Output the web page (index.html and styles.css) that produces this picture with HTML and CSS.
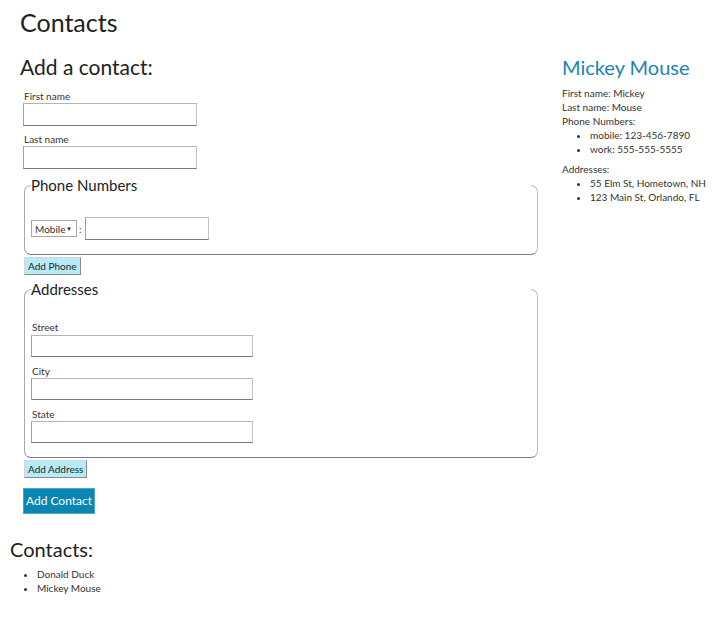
FILE: index.html
```html
<!DOCTYPE html>
<html lang="en">
<head>
<meta charset="utf-8">
<title>Contacts</title>
<link rel="stylesheet" href="styles.css">
</head>
<body>
<div class="page">
  <header class="top">
    <h1 class="title">Contacts</h1>
  </header>
  <main class="layout">
    <section class="editor">
      <h2 class="heading">Add a contact:</h2>
      <form class="form">
        <div class="group">
          <label class="label" for="first">First name</label>
          <input class="field" id="first" type="text">
        </div>
        <div class="group">
          <label class="label" for="last">Last name</label>
          <input class="field" id="last" type="text">
        </div>
        <fieldset class="box phones">
          <legend class="legend">Phone Numbers</legend>
          <div class="phone-row">
            <span class="select-wrap">
              <select class="select">
                <option>Mobile</option>
                <option>Work</option>
              </select>
            </span>
            <span class="colon">:</span>
            <input class="field phone" type="text">
          </div>
        </fieldset>
        <button type="button" class="small-btn">Add Phone</button>
        <fieldset class="box addresses">
          <legend class="legend">Addresses</legend>
          <div class="group">
            <label class="label">Street</label>
            <input class="field wide" type="text">
          </div>
          <div class="group">
            <label class="label">City</label>
            <input class="field wide" type="text">
          </div>
          <div class="group last">
            <label class="label">State</label>
            <input class="field wide" type="text">
          </div>
        </fieldset>
        <button type="button" class="small-btn">Add Address</button>
        <div class="actions">
          <button type="button" class="primary-btn">Add Contact</button>
        </div>
      </form>
    </section>
    <aside class="details">
      <h2 class="name">Mickey Mouse</h2>
      <div class="line">First name: Mickey</div>
      <div class="line">Last name: Mouse</div>
      <div class="line">Phone Numbers:</div>
      <ul class="list detail-list">
        <li>mobile: 123-456-7890</li>
        <li>work: 555-555-5555</li>
      </ul>
      <div class="line">Addresses:</div>
      <ul class="list detail-list">
        <li>55 Elm St, Hometown, NH</li>
        <li>123 Main St, Orlando, FL</li>
      </ul>
    </aside>
  </main>
  <section class="contacts">
    <h2 class="heading">Contacts:</h2>
    <ul class="list contact-list">
      <li>Donald Duck</li>
      <li>Mickey Mouse</li>
    </ul>
  </section>
</div>
</body>
</html>
```
FILE: styles.css
```css
html, body {
  margin: 0;
  padding: 0;
  background: #fff;
}
body {
  font-family: Lato, "Open Sans", sans-serif;
  color: #333;
  font-size: 10px;
  line-height: 14px;
}
.page {
  padding: 0 10px;
}
.top {
  padding: 7px 10px 0;
}
.title {
  margin: 0;
  font-size: 25px;
  line-height: 30px;
  font-weight: 400;
  color: #222;
}
.layout {
  display: grid;
  grid-template-columns: 518px 1fr;
  column-gap: 24px;
  padding: 18px 0 0 10px;
}
.heading, .name {
  margin: 0;
  font-size: 20px;
  line-height: 24px;
  font-weight: 400;
  color: #222;
}
.editor .heading {
  font-size: 21px;
}
.name {
  color: #1785b6;
}
.form {
  margin: 0;
  padding: 11px 0 0 3px;
  display: flex;
  flex-direction: column;
  align-items: flex-start;
}
.group {
  display: flex;
  flex-direction: column;
  align-items: flex-start;
  margin-bottom: 7px;
}
.group.last {
  margin-bottom: 0;
}
.label {
  font-size: 10px;
  line-height: 12px;
  margin-bottom: 1px;
  padding-left: 1px;
  color: #333;
}
.field {
  box-sizing: border-box;
  width: 174px;
  height: 23px;
  margin: 0;
  padding: 2px 4px;
  border: 1px solid;
  border-color: #b5b5b5 #c4c4c4 #7a7a7a #a0a0a0;
  background: #fff;
  font: inherit;
}
.field.wide {
  width: 222px;
  height: 22px;
}
.field.phone {
  width: 124px;
}
.box {
  box-sizing: border-box;
  margin: 0 0 0 1px;
  width: 514px;
  padding: 0 6px 14px 6px;
  border: 1px solid #bdbdbd;
  border-bottom-color: #7d7d7d;
  border-left-color: #a9a9a9;
  border-radius: 7px;
  min-width: 0;
}
.legend {
  width: 100%;
  padding: 0;
  font-size: 15px;
  line-height: 18px;
  color: #222;
}
.phones .phone-row {
  display: flex;
  align-items: center;
  margin-top: 23px;
}
.addresses .group {
  margin-bottom: 8px;
}
.addresses .group.last {
  margin-bottom: 0;
}
.addresses .group:first-of-type {
  margin-top: 23px;
}
.addresses .group:first-of-type .label {
  margin-bottom: 2px;
}
.select-wrap {
  position: relative;
  display: inline-block;
}
.select {
  appearance: none;
  -webkit-appearance: none;
  box-sizing: border-box;
  height: 17px;
  width: 46px;
  margin: 0;
  padding: 0 0 0 3px;
  border: 1px solid #a6a6a6;
  border-radius: 0;
  background: #fff;
  font: inherit;
  font-size: 10px;
  color: #333;
}
.select-wrap::after {
  content: "▼";
  position: absolute;
  right: 5px;
  top: 5px;
  font-size: 6px;
  line-height: 7px;
  color: #222;
  pointer-events: none;
}
.colon {
  margin: 0 3px 0 2px;
  font-size: 10px;
}
.small-btn {
  margin: 2px 0 0 1px;
  height: 18px;
  padding: 0 3px;
  border: 1px solid;
  border-color: #d5d5d5 #8a8a8a #8a8a8a #d5d5d5;
  background: #b7ebfa;
  font: inherit;
  font-size: 10px;
  line-height: 14px;
  color: #222;
}
.addresses {
  margin-top: 5px;
}
.actions {
  margin-top: 10px;
}
.primary-btn {
  margin: 0;
  height: 26px;
  width: 72px;
  padding: 0;
  border: 1px solid #4aa3d3;
  background: #0b85b2;
  color: #fff;
  font: inherit;
  font-size: 12px;
  line-height: 16px;
  white-space: nowrap;
}
.details {
  min-width: 0;
  white-space: nowrap;
}
.details .name {
  margin-bottom: 7px;
}
.line {
  line-height: 14px;
}
.list {
  margin: 0;
  padding-left: 28px;
}
.list li {
  line-height: 14px;
}
.detail-list {
  margin-bottom: 6px;
}
.contacts {
  padding-top: 23px;
}
.contact-list {
  margin-top: 6px;
  padding-left: 27px;
}
```
